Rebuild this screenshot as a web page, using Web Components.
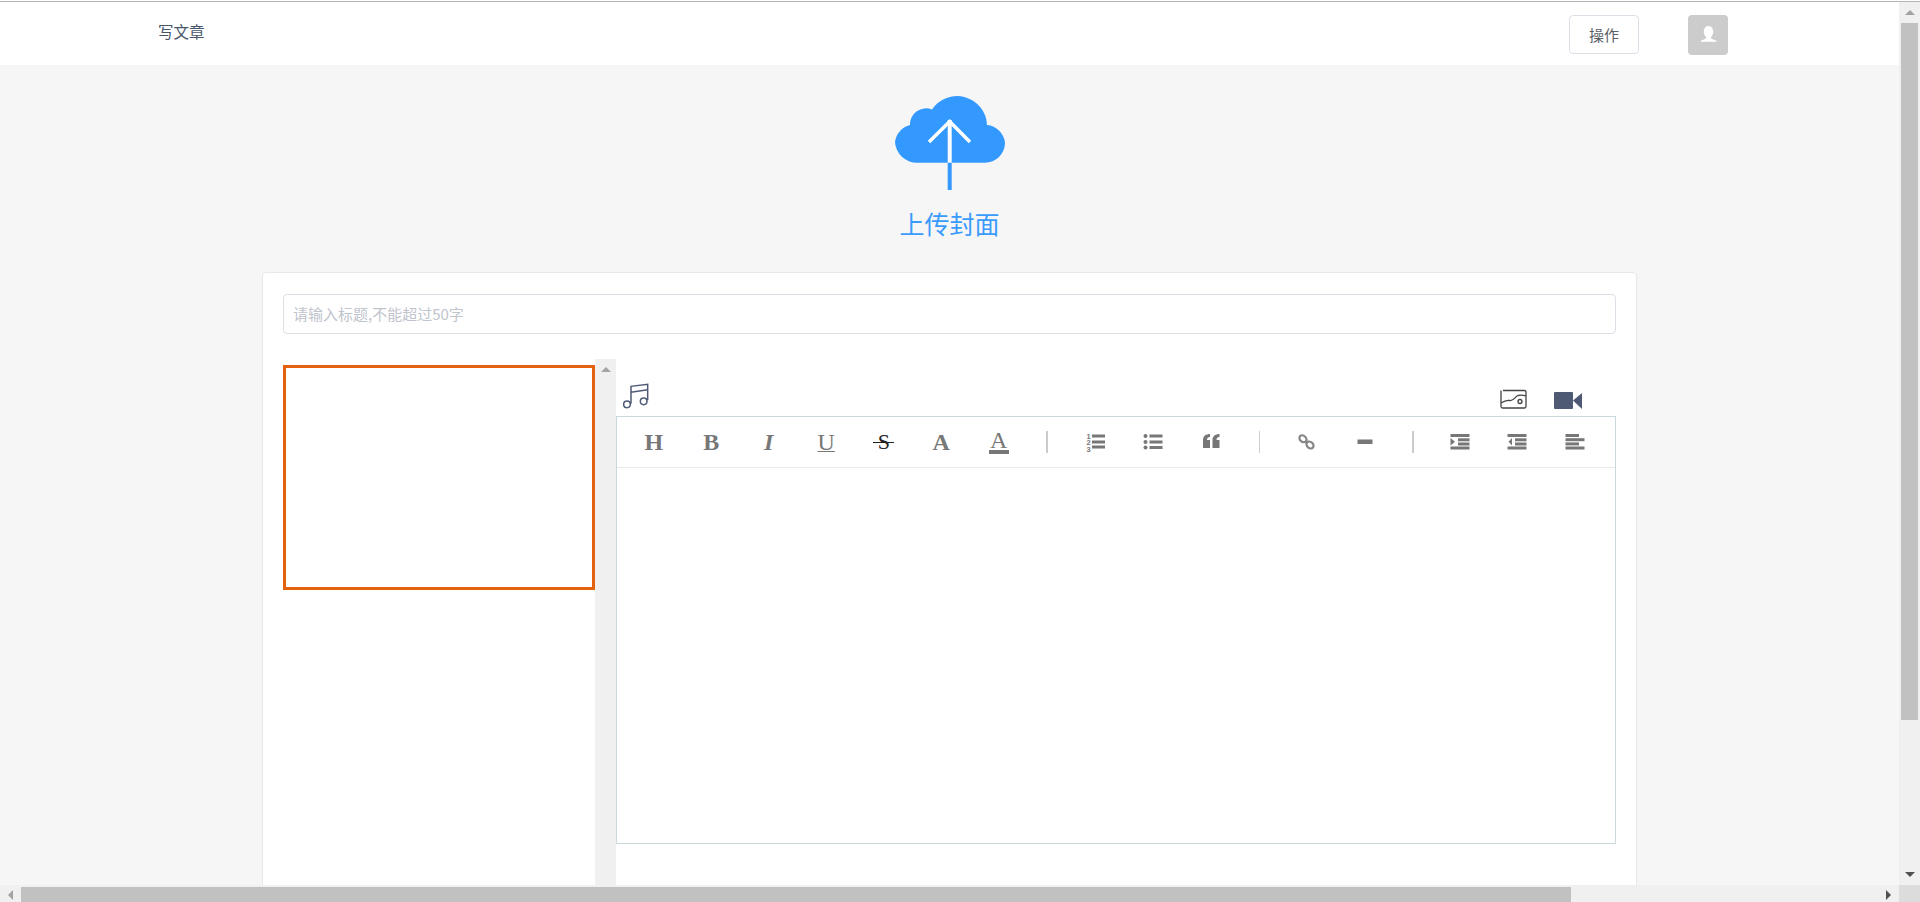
<!DOCTYPE html>
<html lang="zh-CN">
<head>
<meta charset="utf-8">
<title>写文章</title>
<style>
html,body{margin:0;height:100%;overflow:hidden;background:#f6f6f6;font-family:"Noto Sans CJK SC","Liberation Sans",sans-serif}
</style>
</head>
<body>
<app-window>
  <scroll-bar slot="vbar" orient="v" thumb="697" arrow-a="#a3a3a3" arrow-b="#505050"></scroll-bar>
  <scroll-bar slot="hbar" orient="h" thumb="1550" arrow-a="#a3a3a3" arrow-b="#505050"></scroll-bar>
  <top-bar></top-bar>
  <cover-upload></cover-upload>
  <article-card>
    <title-input slot="title"></title-input>
    <side-panel slot="side"></side-panel>
    <media-row slot="media"></media-row>
    <rich-editor slot="editor">
      <tool-btn><span style="font-weight:700;font-size:24px">H</span></tool-btn>
      <tool-btn><span style="font-weight:700;font-size:24px">B</span></tool-btn>
      <tool-btn><span style="font-style:italic;font-weight:700;font-size:24px">I</span></tool-btn>
      <tool-btn><span style="font-size:24px;text-decoration:underline;text-underline-offset:1px;text-decoration-thickness:1px">U</span></tool-btn>
      <tool-btn><span style="font-size:22px;color:#222;display:inline-block;padding:0 4.500px;background:linear-gradient(#222,#222) center 54%/100% 1px no-repeat">S</span></tool-btn>
      <tool-btn><span style="font-weight:700;font-size:24px">A</span></tool-btn>
      <tool-btn><span style="font-size:24px;border-bottom:4px solid #777;line-height:20px;display:inline-block;padding:0 1.500px;height:20px">A</span></tool-btn>
      <tool-sep style="--sep:39.5px;--w:2px"></tool-sep>
      <tool-btn><svg width="20" height="20" viewBox="0 0 20 20" fill="#777"><rect x="6" y="2.500" width="13" height="3"/><rect x="6" y="8.500" width="13" height="3"/><rect x="6" y="13.500" width="13" height="3"/><text x="0.500" y="6.500" font-size="7.500" font-weight="700" font-family="Liberation Sans">1</text><text x="0.500" y="13" font-size="7.500" font-weight="700" font-family="Liberation Sans">2</text><text x="0.500" y="19.500" font-size="7.500" font-weight="700" font-family="Liberation Sans">3</text></svg></tool-btn>
      <tool-btn><svg width="20" height="20" viewBox="0 0 20 20" fill="#777"><circle cx="2.500" cy="4" r="2"/><circle cx="2.500" cy="10" r="2"/><circle cx="2.500" cy="15.500" r="2"/><rect x="6.500" y="2.500" width="13" height="3"/><rect x="6.500" y="8.500" width="13" height="3"/><rect x="6.500" y="14" width="13" height="3"/></svg></tool-btn>
      <tool-btn><svg style="margin-top:-2px" width="18" height="16" viewBox="0 0 18 16" fill="#777"><path d="M8 1v3c-2 0-3 1-3 3h3v8H1V7c0-4 3-6 7-6zM17.500 1v3c-2 0-3 1-3 3h3v8h-7V7c0-4 3-6 7-6z"/></svg></tool-btn>
      <tool-sep style="--sep:39.5px;--w:1px"></tool-sep>
      <tool-btn><svg style="margin-left:-2px" width="18" height="18" viewBox="0 0 18 18" fill="none" stroke="#858585" stroke-width="2.200"><ellipse cx="5" cy="5.800" rx="3.900" ry="3" transform="rotate(40 5 5.800)"/><ellipse cx="12" cy="12" rx="3.900" ry="3" transform="rotate(40 12 12)"/></svg></tool-btn>
      <tool-btn><svg width="16" height="6" viewBox="0 0 16 6"><rect x="0.500" y="0.500" width="15" height="4.500" fill="#777"/></svg></tool-btn>
      <tool-sep style="--sep:37px;--w:2px"></tool-sep>
      <tool-btn><svg width="20" height="16" viewBox="0 0 20 16" fill="#777"><rect x="0.500" width="19" height="3"/><rect x="8" y="4.300" width="11.500" height="3"/><rect x="8" y="8.500" width="11.500" height="3"/><rect x="0.500" y="12.500" width="19" height="3"/><path d="M0.500 4l4.500 3.800-4.500 3.700z"/></svg></tool-btn>
      <tool-btn><svg width="20" height="16" viewBox="0 0 20 16" fill="#777"><rect x="0.500" width="19" height="3"/><rect x="8" y="4.300" width="11.500" height="3"/><rect x="8" y="8.500" width="11.500" height="3"/><rect x="0.500" y="12.500" width="19" height="3"/><path d="M5 4L1.500 7.800 5 11.500z"/></svg></tool-btn>
      <tool-btn><svg width="20" height="16" viewBox="0 0 20 16" fill="#777"><rect x="0.500" width="13.500" height="3"/><rect x="0.500" y="4.200" width="19" height="3"/><rect x="0.500" y="8.400" width="13.500" height="3"/><rect x="0.500" y="12.500" width="19" height="3"/></svg></tool-btn>
    </rich-editor>
  </article-card>
</app-window>
<script>
function def(name, css, html, extra){
  const tpl=document.createElement('template');
  tpl.innerHTML=`<style>${css}</style>${html}`;
  customElements.define(name,class extends HTMLElement{
    constructor(){super();this.attachShadow({mode:'open'}).appendChild(tpl.content.cloneNode(true));}
    connectedCallback(){extra&&extra.call(this);}
  });
}
def('app-window',
 `:host{display:grid;grid-template-columns:1fr 21px;grid-template-rows:2px 1fr 17px;height:902px;width:1920px;background:#f6f6f6}
  .rule{grid-column:1/3;background:#fff;border-bottom:1px solid #b4b4b4;box-sizing:border-box}
  main{overflow:hidden;min-width:0;min-height:0;display:block}
  .corner{background:#dcdcdc}`,
 `<div class="rule"></div><main><slot></slot></main><slot name="vbar"></slot><slot name="hbar"></slot><div class="corner"></div>`);
def('scroll-bar',
 `:host{display:flex;background:#f0f0f0;overflow:hidden}
  :host([orient=v]){flex-direction:column;width:21px}
  :host([orient=h]){flex-direction:row;height:17px}
  .btn{flex:none;display:flex;align-items:center;justify-content:center}
  :host([orient=v]) .btn{height:21px}
  :host([orient=h]) .btn{width:21px}
  .thumb{flex:none;background:#c1c1c1}
  :host([orient=v]) .thumb{width:17px;margin:0 2px}
  :host([orient=h]) .thumb{height:15px;margin-top:2px}
  .fill{flex:1}
  i{display:block;width:0;height:0}
  :host([orient=v]) .a i{border:solid transparent;border-width:0 5px 5px;border-bottom-color:var(--ca)}
  :host([orient=v]) .b i{border:solid transparent;border-width:5px 5px 0;border-top-color:var(--cb)}
  :host([orient=h]) .a i{border:solid transparent;border-width:5px 5px 5px 0;border-right-color:var(--ca);margin-top:2px}
  :host([orient=h]) .b i{border:solid transparent;border-width:5px 0 5px 5px;border-left-color:var(--cb);margin-top:2px}`,
 `<div class="btn a"><i></i></div><div class="thumb"></div><div class="fill"></div><div class="btn b"><i></i></div>`,
 function(){
  const v=this.getAttribute('orient')==='v', t=this.shadowRoot.querySelector('.thumb'), s=(this.getAttribute('thumb')||0)+'px';
  if(v)t.style.height=s;else t.style.width=s;
  this.style.setProperty('--ca',this.getAttribute('arrow-a')||'#a3a3a3');
  this.style.setProperty('--cb',this.getAttribute('arrow-b')||'#505050');
 });
def('top-bar',
 `:host{display:flex;align-items:center;height:63px;background:#fff;padding:0 171px 0 158px;box-sizing:border-box;color:#475669;font-size:15px}
  .t{margin-top:-6px;line-height:20px;font-size:15.500px}
  button{margin-left:auto;width:70px;height:39px;box-sizing:border-box;background:#fff;border:1px solid #dcdfe6;border-radius:4px;font:inherit;color:#5a5e66;padding:0;margin-top:2px}
  .av{margin-left:49px;width:40px;height:40px;border-radius:4px;background:#ccc;margin-top:3px}
  svg{display:block}`,
 `<div class="t">写文章</div><button>操作</button><div class="av"><svg width="40" height="40" viewBox="0 0 40 40"><path fill="#fff" d="M20.300 11c3 0 4.900 2.400 4.900 5.700 0 2.400-1 4.200-2.200 5.300-.4 1.600 1 2 3 2.800 1.400.5 2.500 1.100 2.700 1.900H12.500c.2-.8 1.200-1.400 2.600-1.900 2-.8 3.400-1.200 3-2.800-1.200-1.100-2.300-2.900-2.300-5.300 0-3.300 1.800-5.700 4.500-5.700z"/></svg></div>`);
def('cover-upload',
 `:host{display:flex;flex-direction:column;align-items:center;height:207px;padding-top:31px;box-sizing:border-box;color:#3a9bfd;font-size:25px}
  svg{display:block;flex:none}
  div{margin-top:14px;line-height:36px}`,
 `<svg width="110" height="95" viewBox="0 0 110 95"><path fill="#39f" d="M22 66.700A22 22 0 0 1 0 46a20 20 0 0 1 15-17A16 16 0 0 1 37 13.500a30 30 0 0 1 55 15.500 20 20 0 0 1 18 18 20 20 0 0 1-20 19.700z"/><path d="M54.700 24V67" stroke="#fff" stroke-width="4" fill="none"/><path d="M54.700 66.700V94" stroke="#39f" stroke-width="4" fill="none"/><path d="M34 46L54.700 25.500 75 46" stroke="#fff" stroke-width="3.500" fill="none"/></svg><div>上传封面</div>`);
def('article-card',
 `:host{display:block;width:1375px;margin-left:262px;box-sizing:border-box;background:#fff;border:1px solid #e6e8ee;border-radius:4px;padding:21px 20px 20px;height:900px}
  .row{display:flex;margin-top:25px}
  .left{flex:none;width:333px}
  .right{flex:none;width:1000px}`,
 `<slot name="title"></slot><div class="row"><div class="left"><slot name="side"></slot></div><div class="right"><slot name="media"></slot><slot name="editor"></slot></div></div>`);
def('title-input',
 `:host{display:block}
  input{display:block;width:100%;height:40px;box-sizing:border-box;border:1px solid #dcdfe6;border-radius:4px;padding:0 9px 2px;font:15px "Noto Sans CJK SC","Liberation Sans",sans-serif;color:#5a5e66;background:#fff;outline:0}
  input::placeholder{color:#c0c4cc;opacity:1}`,
 `<input type="text" placeholder="请输入标题,不能超过50字">`);
def('side-panel',
 `:host{display:flex;height:526px}
  .box{flex:none;width:312px;padding-top:6px;box-sizing:border-box}
  .cov{height:225px;border:3px solid #e4620f;box-sizing:border-box}`,
 `<div class="box"><div class="cov"></div></div><scroll-bar orient="v" thumb="0" arrow-a="#a3a3a3" arrow-b="transparent"></scroll-bar>`);
def('media-row',
 `:host{display:flex;align-items:flex-end;height:57px;box-sizing:border-box;padding:0 34px 7px 7px}
  svg{display:block;flex:none}
  .img{margin-left:auto}
  .vid{margin-left:27px}`,
 `<svg class="music" width="26" height="26" viewBox="38 40 78 78" fill="none" stroke="#4f5b76" stroke-width="4.500"><circle cx="50" cy="104" r="10"/><circle cx="100" cy="95" r="10"/><path d="M62 102V50L112 44V92M62 68L112 60"/></svg>
  <svg class="img" width="27" height="20" viewBox="0 0 27 20" fill="none" stroke="#444" stroke-width="1.300"><path d="M1 1.500V17.500Q1 19 2.500 19H24.500Q26 19 26 17.500V3Q26 1.500 24.500 1.500H3"/><path d="M1 14c3-2 6-3 9-2.500 4 .5 5-4 8-5 3-.8 5-.5 8 .5"/><circle cx="20" cy="12.500" r="2"/></svg>
  <svg class="vid" width="28" height="17" viewBox="0 0 28 17" fill="#4e5a73"><rect y="0" width="19" height="17" rx="1"/><path d="M19 8.500L28 1V17z"/></svg>`);
def('rich-editor',
 `:host{display:block;height:428px;box-sizing:border-box;border:1px solid #c9d8db}
  .bar{display:flex;align-items:center;height:50px;padding-left:8px;border-bottom:1px solid #e8eaea;box-sizing:content-box}`,
 `<div class="bar"><slot></slot></div><div class="body"></div>`);
def('tool-btn',
 `:host{flex:none;width:57.5px;height:50px;display:flex;align-items:center;justify-content:center;color:#777;font-family:"Liberation Serif",serif;line-height:1}
  ::slotted(svg){display:block}`,
 `<slot></slot>`);
def('tool-sep',
 `:host{flex:none;width:var(--sep);height:22px;display:flex;justify-content:center}
  i{display:block;width:var(--w);background:#ccc}`,
 `<i></i>`);
</script>
</body>
</html>
